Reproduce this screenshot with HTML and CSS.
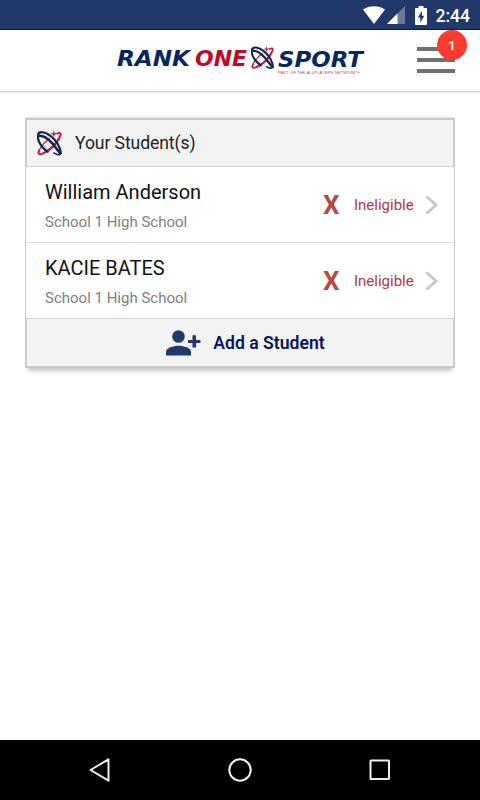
FILE: index.html
```html
<!DOCTYPE html>
<html lang="en">
<head>
    <meta charset="UTF-8">
    <meta name="viewport" content="width=device-width, initial-scale=1.0">
    <title>Rank One Sport</title>
    <link rel="stylesheet" href="styles.css">
</head>
<body>
    <!-- Orbit mark, shared by the logo and the card header -->
    <svg class="defs" width="0" height="0">
        <symbol id="orbit" viewBox="0 0 26 26">
            <g fill="none">
                <path d="M20.500 3.500C24 2 25.500 2.500 24 6C21 13 14 20 7 23.500C1.500 26 .5 24 2.500 20" stroke="#c41e3f" stroke-width="2.100"/>
                <path d="M23 8C19 15 13 20.500 6 24" stroke="#c41e3f" stroke-width="2"/>
                <path d="M2.500 20C5 15.500 9 11 13 8" stroke="#c41e3f" stroke-width="1.400"/>
                <path d="M5 14L12 21" stroke="#8593b5" stroke-width=".8"/>
                <path d="M12 22.500C5 19 0 10 1 4.500C2 .5 8 1 14 5.500C20 10 25 18 24.800 24.500" stroke="#14234f" stroke-width="2.300"/>
                <path d="M2 5.500C7 5 12 9 16 13.500C19 17 21.500 21 25 24.500" stroke="#14234f" stroke-width="2.700"/>
                <path d="M17 23C20 25 23.500 26 24.500 24" stroke="#14234f" stroke-width="1.800"/>
            </g>
            <path d="M17.500 0L18.500 2.700L21.500 3.500L18.500 4.300L17.500 7L16.500 4.300L13.500 3.500L16.500 2.700Z" fill="#d4213f"/>
        </symbol>
    </svg>

    <div class="status-bar">
        <svg class="wifi" width="22" height="18" viewBox="0 0 22 18"><path d="M0 3.500C6-1 16-1 22 3.500L11 18Z" fill="#fff"/></svg>
        <svg class="signal" width="18" height="18" viewBox="0 0 18 18"><path d="M18 0V18H0Z" fill="#6c7b9b"/><path d="M10.500 7.500V18H0Z" fill="#fff"/></svg>
        <svg class="battery" width="12" height="19" viewBox="0 0 12 19"><path d="M3.500 0H8.500V2H11Q12 2 12 3V18Q12 19 11 19H1Q0 19 0 18V3Q0 2 1 2H3.500Z" fill="#fff"/><path d="M7 5L2.800 11.500H5.300V16.500L9.300 9.700H7Z" fill="#21386a"/></svg>
        <span class="clock">2:44</span>
    </div>

    <div class="header">
        <svg class="logo" width="250" height="32" viewBox="0 0 250 32">
            <g class="logo-name">
                <text x="2" y="22" textLength="73" lengthAdjust="spacingAndGlyphs" fill="#07265f">RANK</text>
                <text x="80" y="22" textLength="52" lengthAdjust="spacingAndGlyphs" fill="#bd0928">ONE</text>
                <text x="163" y="23" textLength="85" lengthAdjust="spacingAndGlyphs" fill="#07265f">SPORT</text>
            </g>
            <use href="#orbit" x="136" y="2" width="23" height="23"/>
            <text class="logo-tag" x="163" y="29.500" textLength="82" lengthAdjust="spacing">PART OF THE ALLPLAYERS NETWORK™</text>
        </svg>
        <div class="menu">
            <span class="menu-line"></span>
            <span class="menu-line"></span>
            <span class="menu-line"></span>
            <span class="badge">1</span>
        </div>
    </div>

    <div class="content">
        <div class="card">
            <div class="card-header">
                <svg width="25" height="26"><use href="#orbit"/></svg>
                <span>Your Student(s)</span>
            </div>
            <div class="student">
                <div class="student-info">
                    <div class="student-name">William Anderson</div>
                    <div class="student-school">School 1 High School</div>
                </div>
                <span class="status-mark">X</span>
                <span class="status-text">Ineligible</span>
                <svg class="chevron" width="14" height="20" viewBox="0 0 14 20"><path d="M1.500 1.500L11 10L1.500 18.500"/></svg>
            </div>
            <div class="student">
                <div class="student-info">
                    <div class="student-name">KACIE BATES</div>
                    <div class="student-school">School 1 High School</div>
                </div>
                <span class="status-mark">X</span>
                <span class="status-text">Ineligible</span>
                <svg class="chevron" width="14" height="20" viewBox="0 0 14 20"><path d="M1.500 1.500L11 10L1.500 18.500"/></svg>
            </div>
            <div class="card-footer">
                <svg width="35" height="26" viewBox="0 0 35 26" fill="#21386a"><circle cx="12.500" cy="6.500" r="6.300"/><path d="M0 25.500V22C0 18 7 15.800 12.500 15.800S25 18 25 22V25.500Z"/><path d="M26.500 5.300H30V10H34.500V13H30V17.500H26.500V13H22V10H26.500Z"/></svg>
                <span>Add a Student</span>
            </div>
        </div>
    </div>

    <div class="nav-bar">
        <svg width="24" height="26" viewBox="0 0 24 26"><path d="M20.500 2.300V23.700L2.500 13Z"/></svg>
        <svg width="26" height="26" viewBox="0 0 26 26"><circle cx="13" cy="13" r="10.700"/></svg>
        <svg width="24" height="26" viewBox="0 0 24 26"><rect x="2.500" y="3.500" width="18.500" height="18.500" rx=".5"/></svg>
    </div>
</body>
</html>
```

FILE: styles.css
```css
* {
    box-sizing: border-box;
}
body {
    font-family: Roboto, sans-serif;
    background-color: #ffffff;
    margin: 0;
    height: 800px;
    display: flex;
    flex-direction: column;
    overflow: hidden;
}
svg {
    display: block;
    flex-shrink: 0;
}
.defs {
    position: absolute;
}
.status-bar {
    height: 30px;
    background-color: #21386a;
    border-bottom: 1px solid #06164a;
    display: flex;
    align-items: center;
    justify-content: flex-end;
    padding: 1px 10px 0 0;
    color: #ffffff;
}
.signal {
    margin-left: 2px;
}
.battery {
    margin-left: 10px;
}
.clock {
    margin-left: 9px;
    padding-top: 1px;
    font-size: 17.5px;
    font-weight: 500;
    line-height: 28px;
}
.header {
    height: 62px;
    border-bottom: 1px solid #cccccc;
    box-shadow: 0 1px 1px #eeeeee;
    display: flex;
    justify-content: space-between;
    padding: 14px 25px 0 115px;
}
.logo-name {
    font-family: "DejaVu Sans", sans-serif;
    font-size: 21.5px;
    font-weight: bold;
    font-style: italic;
}
.logo-tag {
    font-family: "Liberation Sans", sans-serif;
    font-size: 3.8px;
    fill: #c8304c;
}
.menu {
    position: relative;
    width: 38px;
    padding-top: 3px;
    display: flex;
    flex-direction: column;
    gap: 7px;
}
.menu-line {
    height: 4px;
    background-color: #707070;
}
.badge {
    position: absolute;
    top: -14px;
    right: -12px;
    width: 30px;
    height: 30px;
    border-radius: 50%;
    background-color: #ff3b30;
    color: #ffffff;
    font-size: 13px;
    font-weight: 500;
    line-height: 31px;
    text-align: center;
}
.content {
    flex: 1;
    padding: 26px 25px 0;
}
.card {
    height: 250px;
    border: 2px solid #c8c8c8;
    border-left-width: 1px;
    border-right-width: 1px;
    box-shadow: 0 6px 5px -3px #c4c4c4, 0 -3px 2px -2px #dddddd;
    clip-path: inset(-4px 0 -12px);
}
.card-header {
    height: 47px;
    background-color: #f3f3f3;
    border: 1px solid #d0d0d0;
    border-top: none;
    display: flex;
    align-items: center;
    gap: 13px;
    padding-left: 10px;
    font-size: 17.6px;
    letter-spacing: -0.1px;
    color: #222222;
}
.student {
    height: 75px;
    display: flex;
    align-items: center;
    padding: 3px 15px 0 19px;
}
.student + .student {
    height: 76px;
    border-top: 1px solid #dddddd;
}
.student-info {
    flex: 1;
}
.student-name {
    font-size: 20px;
    line-height: 26px;
    color: #111111;
}
.student-school {
    margin-top: 6px;
    font-size: 15px;
    line-height: 22px;
    color: #808080;
}
.status-mark {
    width: 31px;
    margin-top: -3px;
    font-size: 26px;
    font-weight: bold;
    color: #b94a42;
}
.status-text {
    width: 71px;
    margin-top: -2px;
    font-size: 15px;
    color: #b43a36;
}
.chevron {
    margin-top: -3px;
    fill: none;
    stroke: #c7c7cc;
    stroke-width: 3;
}
.card-footer {
    height: 48px;
    background-color: #f3f3f3;
    border: 1px solid #d0d0d0;
    border-bottom: none;
    display: flex;
    align-items: center;
    justify-content: center;
    gap: 12px;
    padding: 1px 0 0 11px;
    font-size: 17.6px;
    font-weight: 600;
    color: #06165c;
}
.nav-bar {
    height: 60px;
    background-color: #000000;
    display: flex;
    align-items: center;
    justify-content: space-between;
    padding: 0 88px;
}
.nav-bar svg {
    fill: none;
    stroke: #f0f0f0;
    stroke-width: 2;
    stroke-linejoin: round;
}
```
